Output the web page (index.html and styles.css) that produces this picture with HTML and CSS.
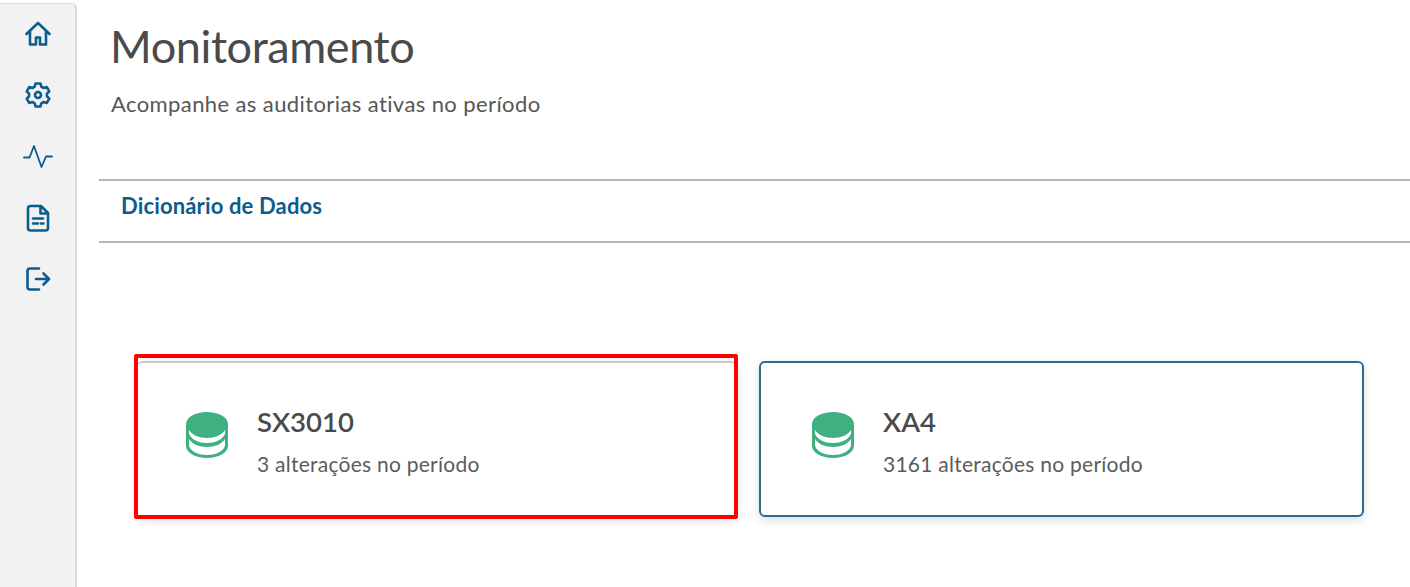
FILE: index.html
```html
<!DOCTYPE html>
<html lang="pt">
<head>
    <meta charset="UTF-8" />
    <title>Monitoramento</title>
    <link rel="stylesheet" href="styles.css">
</head>
<body>
    <div class="layout">
        <nav class="sidebar" aria-label="Menu">
            <svg class="nav-icon" viewBox="0 0 28 28"><path d="M2.500 14 14 3 25.500 14M6 11.500V24.500h6v-7h4v7h6V11.500"/></svg>
            <svg class="nav-icon" viewBox="0 0 28 28"><path d="M11.500 2.500h5l.8 3.200 2.300 1.300 3.200-.9 2.500 4.300-2.400 2.300v2.600l2.400 2.300-2.500 4.300-3.200-.9-2.300 1.300-.8 3.200h-5l-.8-3.200-2.300-1.300-3.200.9-2.500-4.300 2.400-2.300v-2.600l-2.400-2.300 2.500-4.300 3.200.9 2.300-1.300z"/><circle cx="14" cy="14" r="3"/></svg>
            <svg class="nav-icon nav-icon-thin" viewBox="0 0 30 28"><path d="M1 14.500h5.500L11 3l7.500 21 4.500-10.500H29"/></svg>
            <svg class="nav-icon" viewBox="0 0 28 28"><path d="M6.500 2h10.500l7 7v15a2.500 2.500 0 0 1-2.500 2.500h-15A2.500 2.500 0 0 1 4 24V4.500A2.500 2.500 0 0 1 6.500 2zM16.500 2.500V9.500H23.500M9 14.500h10M9 19.500h5M17 19.500h2.500"/></svg>
            <svg class="nav-icon" viewBox="0 0 28 28"><path d="M15 3.500H6A2.500 2.500 0 0 0 3.500 6v16A2.500 2.500 0 0 0 6 24.500h9M12 14h13M19.500 8.500 25 14l-5.500 5.500"/></svg>
        </nav>

        <main class="content">
            <header class="page-header">
                <h1>Monitoramento</h1>
                <p>Acompanhe as auditorias ativas no período</p>
            </header>

            <div class="tabs">
                <a class="tab" href="#">Dicionário de Dados</a>
            </div>

            <div class="cards">
                <div class="card card-marked">
                    <svg class="db-icon" viewBox="0 0 42 46"><path class="db-body" d="M0 12A21 12 0 0 1 42 12V34A21 12 0 0 1 0 34z"/><path class="db-band" d="M3 18C6 23 13 26 21 26S36 23 39 18V22C36 28 29 31 21 31S6 28 3 22zM3 27C6 32 13 35 21 35S36 32 39 27V33C39 38 31 43 21 43S3 38 3 33z"/></svg>
                    <div class="card-text">
                        <h2>SX3010</h2>
                        <p>3 alterações no período</p>
                    </div>
                    <span class="marker"></span>
                </div>
                <div class="card card-active">
                    <svg class="db-icon" viewBox="0 0 42 46"><path class="db-body" d="M0 12A21 12 0 0 1 42 12V34A21 12 0 0 1 0 34z"/><path class="db-band" d="M3 18C6 23 13 26 21 26S36 23 39 18V22C36 28 29 31 21 31S6 28 3 22zM3 27C6 32 13 35 21 35S36 32 39 27V33C39 38 31 43 21 43S3 38 3 33z"/></svg>
                    <div class="card-text">
                        <h2>XA4</h2>
                        <p>3161 alterações no período</p>
                    </div>
                </div>
            </div>
        </main>
    </div>
</body>
</html>
```

FILE: styles.css
```css
* {
    box-sizing: border-box;
}
html, body {
    margin: 0;
    height: 100%;
    overflow: hidden;
}
body {
    font-family: 'Lato', 'Open Sans', sans-serif;
    background-color: #fff;
    color: #4a4a4a;
}
.layout {
    display: flex;
    height: 587px;
}
.sidebar {
    width: 77px;
    margin-top: 3px;
    padding-top: 16px;
    display: flex;
    flex-direction: column;
    align-items: center;
    gap: 33.250px;
    background-color: #f2f2f2;
    border-right: 2px solid #d9d9d9;
    border-top: 1px solid #ddd;
    border-top-right-radius: 5px;
    flex-shrink: 0;
}
.nav-icon {
    width: 28px;
    height: 28px;
    fill: none;
    stroke: #0c5c8e;
    stroke-width: 2.600;
    stroke-linejoin: round;
    stroke-linecap: round;
}
.nav-icon-thin {
    width: 30px;
    stroke-width: 1.800;
}
.content {
    flex: 1;
    padding-left: 22px;
    min-width: 0;
}
.page-header {
    padding: 19px 0 0 12px;
    height: 179px;
}
.page-header h1 {
    margin: 0 0 0 -1px;
    font-size: 45px;
    line-height: 54px;
    font-weight: 400;
    letter-spacing: -0.400px;
    color: #4a4a4a;
}
.page-header p {
    margin: 17px 0 0;
    font-size: 22px;
    line-height: 28px;
    letter-spacing: 0.400px;
    color: #565656;
}
.tabs {
    height: 64px;
    padding: 11px 0 0 22px;
    border-top: 2px solid #b5b5b5;
    border-bottom: 2px solid #b5b5b5;
}
.tab {
    font-size: 22px;
    line-height: 28px;
    font-weight: 700;
    letter-spacing: 0.150px;
    color: #0c5c8e;
    text-decoration: none;
}
.cards {
    display: grid;
    grid-template-columns: 600px 605px;
    gap: 22px;
    margin: 118px 0 0 38px;
}
.card {
    position: relative;
    height: 156px;
    display: flex;
    align-items: center;
    gap: 29px;
    padding: 0 0 0 49px;
    border-radius: 6px;
    background-color: #fff;
    box-shadow: 0 3px 10px rgba(0,0,0,0.14);
}
.card-marked {
    border-top: 2px solid #c9c9c9;
}
.card-active {
    border: 2px solid #2f6a90;
    padding: 2px 0 0 51px;
}
.db-icon {
    width: 42px;
    height: 46px;
    margin-bottom: 10px;
    flex-shrink: 0;
}
.db-body {
    fill: #3fb080;
}
.db-band {
    fill: #fff;
}
.card-text {
    padding-top: 2px;
}
.card-text h2 {
    margin: 0;
    font-size: 27.500px;
    line-height: 34px;
    font-weight: 600;
    color: #4a4a4a;
}
.card-text p {
    margin: 12px 0 0;
    font-size: 21px;
    line-height: 26px;
    letter-spacing: 0.250px;
    color: #5c5c5c;
}
/* caixa vermelha por cima do card */
.marker {
    position: absolute;
    top: -9px;
    left: -3px;
    right: -1px;
    bottom: -2px;
    border: 4px solid #f00;
    border-radius: 2px;
}
```
